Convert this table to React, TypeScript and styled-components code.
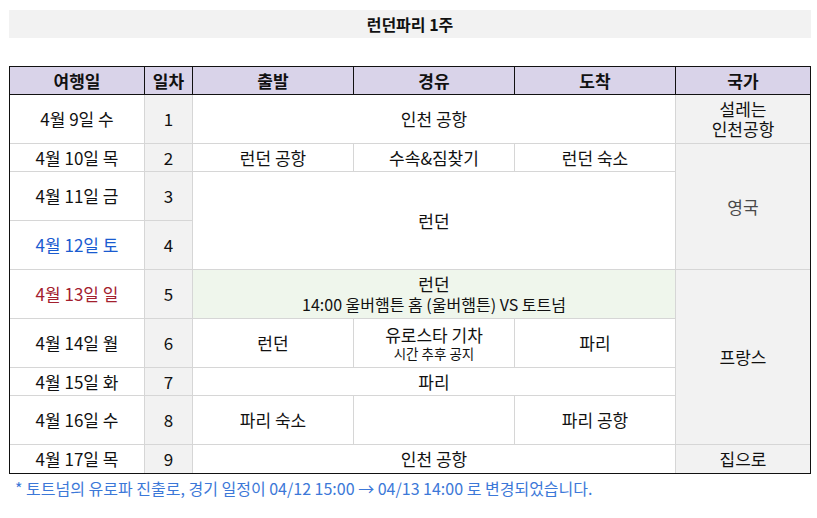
import React from 'react';
import styled, { createGlobalStyle } from 'styled-components';

const GlobalStyle = createGlobalStyle`
    html, body {
        margin: 0;
        padding: 0;
        background: #ffffff;
    }
    body {
        font-family: 'Noto Sans CJK KR', 'Noto Sans', sans-serif;
        color: #111;
    }
`;

type Tone = 'plain' | 'gray' | 'green';

interface CellProps {
    $col: string;
    $row: string;
    $tone?: Tone;
    $color?: string;
    $last?: boolean;
    $bottom?: boolean;
}

const toneBg: Record<Tone, string> = {
    plain: '#ffffff',
    gray: '#f2f2f2',
    green: '#eff6ec',
};

// Travel schedule sheet for the first week
const App = () => {
    return (
        <Page>
            <GlobalStyle />
            <TitleBar>런던파리 1주</TitleBar>
            <Sheet>
                <HeadCell $col='1' $row='1'>여행일</HeadCell>
                <HeadCell $col='2' $row='1'>일차</HeadCell>
                <HeadCell $col='3' $row='1'>출발</HeadCell>
                <HeadCell $col='4' $row='1'>경유</HeadCell>
                <HeadCell $col='5' $row='1'>도착</HeadCell>
                <HeadCell $col='6' $row='1' $last>국가</HeadCell>

                <Cell $col='1' $row='2'>4월 9일 수</Cell>
                <Cell $col='2' $row='2' $tone='gray'>1</Cell>
                <Cell $col='3 / 6' $row='2'>인천 공항</Cell>
                <Cell $col='6' $row='2' $tone='gray' $last>
                    <Lines>
                        <span>설레는</span>
                        <span>인천공항</span>
                    </Lines>
                </Cell>

                <Cell $col='1' $row='3'>4월 10일 목</Cell>
                <Cell $col='2' $row='3' $tone='gray'>2</Cell>
                <Cell $col='3' $row='3'>런던 공항</Cell>
                <Cell $col='4' $row='3'>수속&amp;짐찾기</Cell>
                <Cell $col='5' $row='3'>런던 숙소</Cell>
                <Cell $col='6' $row='3 / 6' $tone='gray' $color='#4a4a4a' $last>영국</Cell>

                <Cell $col='1' $row='4'>4월 11일 금</Cell>
                <Cell $col='2' $row='4' $tone='gray'>3</Cell>
                <Cell $col='3 / 6' $row='4 / 6'>런던</Cell>

                <Cell $col='1' $row='5' $color='#1a5bd0'>4월 12일 토</Cell>
                <Cell $col='2' $row='5' $tone='gray'>4</Cell>

                <Cell $col='1' $row='6' $color='#a3202e'>4월 13일 일</Cell>
                <Cell $col='2' $row='6' $tone='gray'>5</Cell>
                <Cell $col='3 / 6' $row='6' $tone='green'>
                    <Lines>
                        <span>런던</span>
                        <Sub $size={16}>14:00 울버햄튼 홈 (울버햄튼) VS 토트넘</Sub>
                    </Lines>
                </Cell>
                <Cell $col='6' $row='6 / 10' $tone='gray' $last>프랑스</Cell>

                <Cell $col='1' $row='7'>4월 14일 월</Cell>
                <Cell $col='2' $row='7' $tone='gray'>6</Cell>
                <Cell $col='3' $row='7'>런던</Cell>
                <Cell $col='4' $row='7'>
                    <Lines>
                        <span>유로스타 기차</span>
                        <Sub $size={13.5}>시간 추후 공지</Sub>
                    </Lines>
                </Cell>
                <Cell $col='5' $row='7'>파리</Cell>

                <Cell $col='1' $row='8'>4월 15일 화</Cell>
                <Cell $col='2' $row='8' $tone='gray'>7</Cell>
                <Cell $col='3 / 6' $row='8'>파리</Cell>

                <Cell $col='1' $row='9'>4월 16일 수</Cell>
                <Cell $col='2' $row='9' $tone='gray'>8</Cell>
                <Cell $col='3' $row='9'>파리 숙소</Cell>
                <Cell $col='4' $row='9' />
                <Cell $col='5' $row='9'>파리 공항</Cell>

                <Cell $col='1' $row='10' $bottom>4월 17일 목</Cell>
                <Cell $col='2' $row='10' $tone='gray' $bottom>9</Cell>
                <Cell $col='3 / 6' $row='10' $bottom>인천 공항</Cell>
                <Cell $col='6' $row='10' $tone='gray' $last $bottom>집으로</Cell>
            </Sheet>
            <Note>* 토트넘의 유로파 진출로, 경기 일정이 04/12 15:00 → 04/13 14:00 로 변경되었습니다.</Note>
        </Page>
    );
};

const Page = styled.div`
    width: 817px;
    padding: 10px 6px 0 9px;
    box-sizing: border-box;
`;

const TitleBar = styled.div`
    height: 28px;
    width: 802px;
    background: #f2f2f2;
    display: flex;
    align-items: center;
    justify-content: center;
    font-size: 16px;
    font-weight: 700;
    color: #111;
    margin-bottom: 28px;
`;

const Sheet = styled.div`
    display: grid;
    grid-template-columns: 135px 48px 161px 161px 161px 134px;
    grid-template-rows: 28px 49px 28px 49px 49px 49px 49px 28px 49px 28px;
    width: 802px;
    box-sizing: border-box;
    border: 1px solid #111;
`;

const Cell = styled.div<CellProps>`
    grid-column: ${(p) => p.$col};
    grid-row: ${(p) => p.$row};
    display: flex;
    align-items: center;
    justify-content: center;
    text-align: center;
    background: ${(p) => toneBg[p.$tone ?? 'plain']};
    color: ${(p) => p.$color ?? '#111'};
    font-size: 17px;
    line-height: 20px;
    border-right: ${(p) => (p.$last ? 'none' : '1px solid #d6d6d6')};
    border-bottom: ${(p) => (p.$bottom ? 'none' : '1px solid #d6d6d6')};
    box-sizing: border-box;
    white-space: nowrap;
`;

const HeadCell = styled(Cell)`
    background: #d9d3e9;
    font-weight: 700;
    border-right: ${(p) => (p.$last ? 'none' : '1px solid #111')};
    border-bottom: 1px solid #111;
`;

const Lines = styled.div`
    display: flex;
    flex-direction: column;
    align-items: center;
`;

const Sub = styled.span<{ $size: number }>`
    font-size: ${(p) => p.$size}px;
    line-height: ${(p) => (p.$size > 14 ? 20 : 17)}px;
`;

const Note = styled.div`
    margin-top: 4px;
    padding-left: 6px;
    font-size: 16px;
    line-height: 20px;
    color: #3c78d8;
`;

export default App;
